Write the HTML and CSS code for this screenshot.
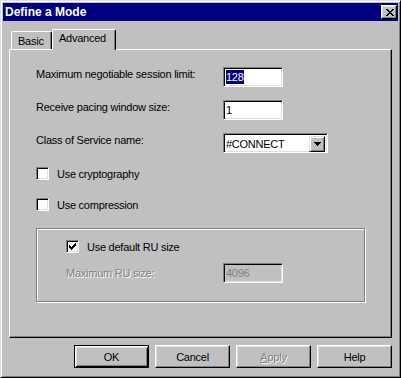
FILE: index.html
```html
<!DOCTYPE html>
<html lang="en">
<head>
  <meta charset="UTF-8">
  <title>Define a Mode</title>
  <link rel="stylesheet" href="styles.css">
</head>
<body>

  <div class="dialog">
    <div class="titlebar">
      <span class="title">Define a Mode</span>
      <span class="close">
        <svg width="8" height="7" viewBox="0 0 8 7" shape-rendering="crispEdges"><path fill="#000" d="M0 0h2v1h-2zM6 0h2v1h-2zM1 1h2v1h-2zM5 1h2v1h-2zM2 2h4v1h-4zM3 3h2v1h-2zM2 4h4v1h-4zM1 5h2v1h-2zM5 5h2v1h-2zM0 6h2v1h-2zM6 6h2v1h-2z"/></svg>
      </span>
    </div>

    <div class="dialog-body">
      <div class="tabs">
        <div class="tab">Basic</div>
        <div class="tab active">Advanced</div>
      </div>

      <div class="panel">
        <div class="form-row">
          <span class="label">Maximum negotiable session limit:</span>
          <span class="field"><span class="selected">128</span></span>
        </div>
        <div class="form-row spaced">
          <span class="label">Receive pacing window size:</span>
          <span class="field">1</span>
        </div>
        <div class="form-row spaced">
          <span class="label">Class of Service name:</span>
          <span class="field combo">
            <span class="combo-text">#CONNECT</span>
            <span class="combo-btn">
              <svg width="7" height="4" viewBox="0 0 7 4" shape-rendering="crispEdges"><path fill="#000" d="M0 0h7v1h-7zM1 1h5v1h-5zM2 2h3v1h-3zM3 3h1v1h-1z"/></svg>
            </span>
          </span>
        </div>

        <div class="check-row first">
          <span class="checkbox"></span>
          <span>Use cryptography</span>
        </div>
        <div class="check-row second">
          <span class="checkbox"></span>
          <span>Use compression</span>
        </div>

        <div class="group">
          <div class="check-row">
            <span class="checkbox">
              <svg width="7" height="7" viewBox="0 0 7 7" shape-rendering="crispEdges"><path fill="#000" d="M6 0h1v1h-1zM5 1h2v1h-2zM0 2h1v1h-1zM4 2h3v1h-3zM0 3h2v1h-2zM3 3h3v1h-3zM0 4h5v1h-5zM1 5h3v1h-3zM2 6h1v1h-1z"/></svg>
            </span>
            <span>Use default RU size</span>
          </div>
          <div class="form-row group-row">
            <span class="label disabled">Maximum RU size:</span>
            <span class="field readonly">4096</span>
          </div>
        </div>
      </div>

      <div class="buttons">
        <span class="btn default">OK</span>
        <span class="btn">Cancel</span>
        <span class="btn disabled"><u>A</u>pply</span>
        <span class="btn">Help</span>
      </div>
    </div>
  </div>

</body>
</html>
```

FILE: styles.css
```css
* {
  box-sizing: border-box;
}

body {
  margin: 0;
  background: #c0c0c0;
  font-family: 'Liberation Sans', Arial, sans-serif;
  font-size: 11px;
  letter-spacing: -0.25px;
  color: #000;
}

.dialog {
  width: 401px;
  height: 378px;
  background: #c0c0c0;
  border: 1px solid;
  border-color: #dfdfdf #000 #000 #dfdfdf;
  box-shadow: inset 1px 1px #fff, inset -1px -1px #808080;
  padding: 2px;
  display: flex;
  flex-direction: column;
}

.titlebar {
  height: 18px;
  background: #000080;
  color: #fff;
  display: flex;
  align-items: center;
  padding: 0 1px 0 2px;
}

.title {
  font-weight: bold;
  font-size: 12px;
  letter-spacing: 0;
}

.close {
  margin-left: auto;
  width: 16px;
  height: 14px;
  background: #c0c0c0;
  border: 1px solid;
  border-color: #fff #000 #000 #fff;
  box-shadow: inset -1px -1px #808080, inset 1px 1px #dfdfdf;
  display: flex;
  align-items: center;
  justify-content: center;
  padding-left: 1px;
}

.close svg,
.combo-btn svg,
.checkbox svg {
  display: block;
}

.dialog-body {
  padding: 8px 6px 0 6px;
}

.tabs {
  display: flex;
  align-items: flex-end;
  height: 20px;
  padding-left: 2px;
}

.tab {
  height: 18px;
  width: 41px;
  padding: 3px 0 0 6px;
  border-top: 1px solid #fff;
  border-left: 1px solid #fff;
  border-right: 1px solid #000;
  border-radius: 2px 2px 0 0;
  box-shadow: inset -1px 0 #808080;
  line-height: 13px;
}

.tab.active {
  height: 21px;
  width: 64px;
  margin-bottom: -1px;
  padding-top: 2px;
  position: relative;
  z-index: 1;
  background: #c0c0c0;
}

.panel {
  height: 289px;
  border: 1px solid;
  border-color: #fff #000 #000 #fff;
  box-shadow: inset -1px -1px #808080;
  padding: 17px 0 0 26px;
}

.form-row {
  display: grid;
  grid-template-columns: 187px auto;
  align-items: center;
  height: 20px;
}

.form-row .label {
  align-self: start;
  padding-top: 1px;
}

.form-row.spaced {
  margin-top: 13px;
}

.field {
  width: 60px;
  height: 20px;
  background: #fff;
  border: 1px solid;
  border-color: #808080 #fff #fff #808080;
  box-shadow: inset 1px 1px #000, inset -1px -1px #dfdfdf;
  padding: 0 0 0 2px;
  line-height: 18px;
}

.selected {
  background: #000080;
  color: #fff;
  padding: 1px 0;
}

.field.combo {
  width: 105px;
  display: flex;
  padding: 2px 2px 2px 2px;
  line-height: 16px;
}

.combo-text {
  flex: 1;
}

.combo-btn {
  width: 16px;
  height: 16px;
  background: #c0c0c0;
  border: 1px solid;
  border-color: #dfdfdf #000 #000 #dfdfdf;
  box-shadow: inset 1px 1px #fff, inset -1px -1px #808080;
  display: flex;
  align-items: center;
  justify-content: center;
}

.field.readonly {
  background: #c0c0c0;
  color: #808080;
}

.check-row {
  display: flex;
  align-items: center;
  gap: 8px;
  height: 13px;
}

.check-row.first {
  margin-top: 14px;
}

.check-row.second {
  margin-top: 18px;
}

.checkbox {
  width: 13px;
  height: 13px;
  background: #fff;
  border: 1px solid;
  border-color: #808080 #fff #fff #808080;
  box-shadow: inset 1px 1px #000, inset -1px -1px #dfdfdf;
  padding: 2px;
}

.group {
  width: 329px;
  height: 74px;
  margin-top: 17px;
  border: 1px solid #808080;
  box-shadow: 1px 1px #fff, inset 1px 1px #fff;
  padding: 11px 0 0 29px;
}

.group-row {
  grid-template-columns: 157px auto;
  margin-top: 10px;
}

.group-row .label {
  align-self: center;
  padding-top: 0;
}

.disabled {
  color: #808080;
  text-shadow: 1px 1px #fff;
}

.buttons {
  display: flex;
  justify-content: flex-end;
  gap: 6px;
  margin-top: 7px;
}

.btn {
  width: 75px;
  height: 23px;
  border: 1px solid;
  border-color: #fff #000 #000 #fff;
  box-shadow: inset -1px -1px #808080, inset 1px 1px #dfdfdf;
  display: flex;
  align-items: center;
  justify-content: center;
}

.btn.default {
  border-color: #000;
  box-shadow: inset 1px 1px #fff, inset -1px -1px #000, inset 2px 2px #dfdfdf, inset -2px -2px #808080;
}
```
